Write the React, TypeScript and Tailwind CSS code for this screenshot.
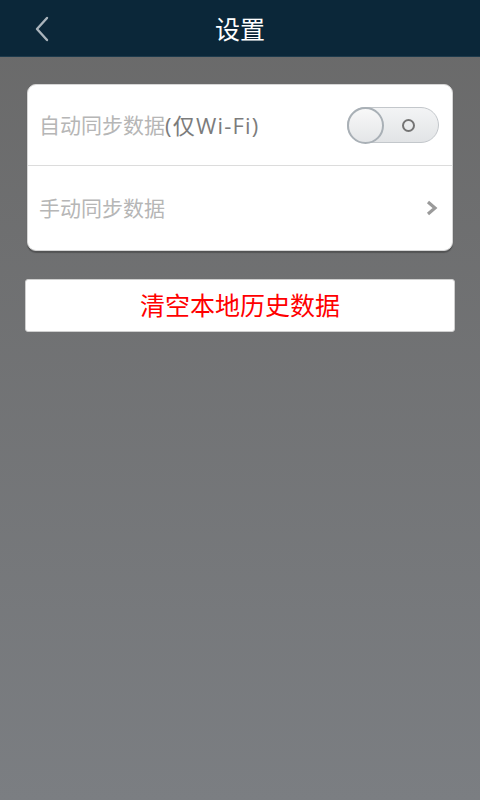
import React from "react";

export default function App() {
  const font = { fontFamily: '"Open Sans", "Noto Sans CJK SC", sans-serif' };
  return (
    <div
      className="w-[480px] h-[800px] flex flex-col bg-gradient-to-b from-[#696969] to-[#7b7e82]"
      style={font}
    >
      <div className="h-[57px] bg-[#0b2739] border-b border-[#1d3a4c] flex items-center relative shrink-0">
        <div className="absolute left-[34px] top-[16px]">
          <svg width="16" height="26" viewBox="0 0 16 26">
            <path d="M13 2 L3 13 L13 24" fill="none" stroke="#aab4bc" strokeWidth="2.4" strokeLinecap="round" strokeLinejoin="round" />
          </svg>
        </div>
        <div className="flex-1 text-center text-white text-[25px] leading-none pt-[2px]">设置</div>
      </div>

      <div className="mx-[27px] mt-[27px] bg-white rounded-[9px] border border-[#d6d6d6] shadow-[0_2px_1px_rgba(0,0,0,0.25)] flex flex-col">
        <div className="h-[80px] flex items-center pl-[11px] pr-[13px]">
          <div className="flex-1 text-[21px] leading-none text-[#b6b6b6] flex items-center">
            <span>自动同步数据</span>
            <span className="text-[#7c7c7c] text-[22px] tracking-[1.2px]">(仅Wi-Fi)</span>
          </div>
          <div className="relative w-[92px] h-[36px] rounded-full bg-gradient-to-b from-[#f3f4f5] to-[#e2e4e6] border border-[#c3c7cb] flex items-center">
            <div className="absolute left-[-1px] top-[-1px] w-[37px] h-[37px] rounded-full bg-gradient-to-b from-[#f8f8f8] to-[#e4e6e8] border-2 border-[#a9b0b6]" />
            <div className="absolute left-[54px] top-[11px] w-[13px] h-[13px] rounded-full border-2 border-[#747474]" />
          </div>
        </div>
        <div className="h-px bg-[#dcdcdc]" />
        <div className="h-[84px] flex items-center pl-[11px] pr-[14px]">
          <div className="flex-1 text-[21px] leading-none text-[#b6b6b6]">手动同步数据</div>
          <svg width="13" height="16" viewBox="0 0 13 16">
            <path d="M3 2 L10 8 L3 14" fill="none" stroke="#9a9a9a" strokeWidth="3.2" strokeLinejoin="miter" />
          </svg>
        </div>
      </div>

      <div className="mx-[25px] mt-[28px] h-[53px] bg-white rounded-[3px] border border-[#cfcfcf] flex items-center justify-center text-[25px] leading-none text-[#ff0000]">
        清空本地历史数据
      </div>
    </div>
  );
}
